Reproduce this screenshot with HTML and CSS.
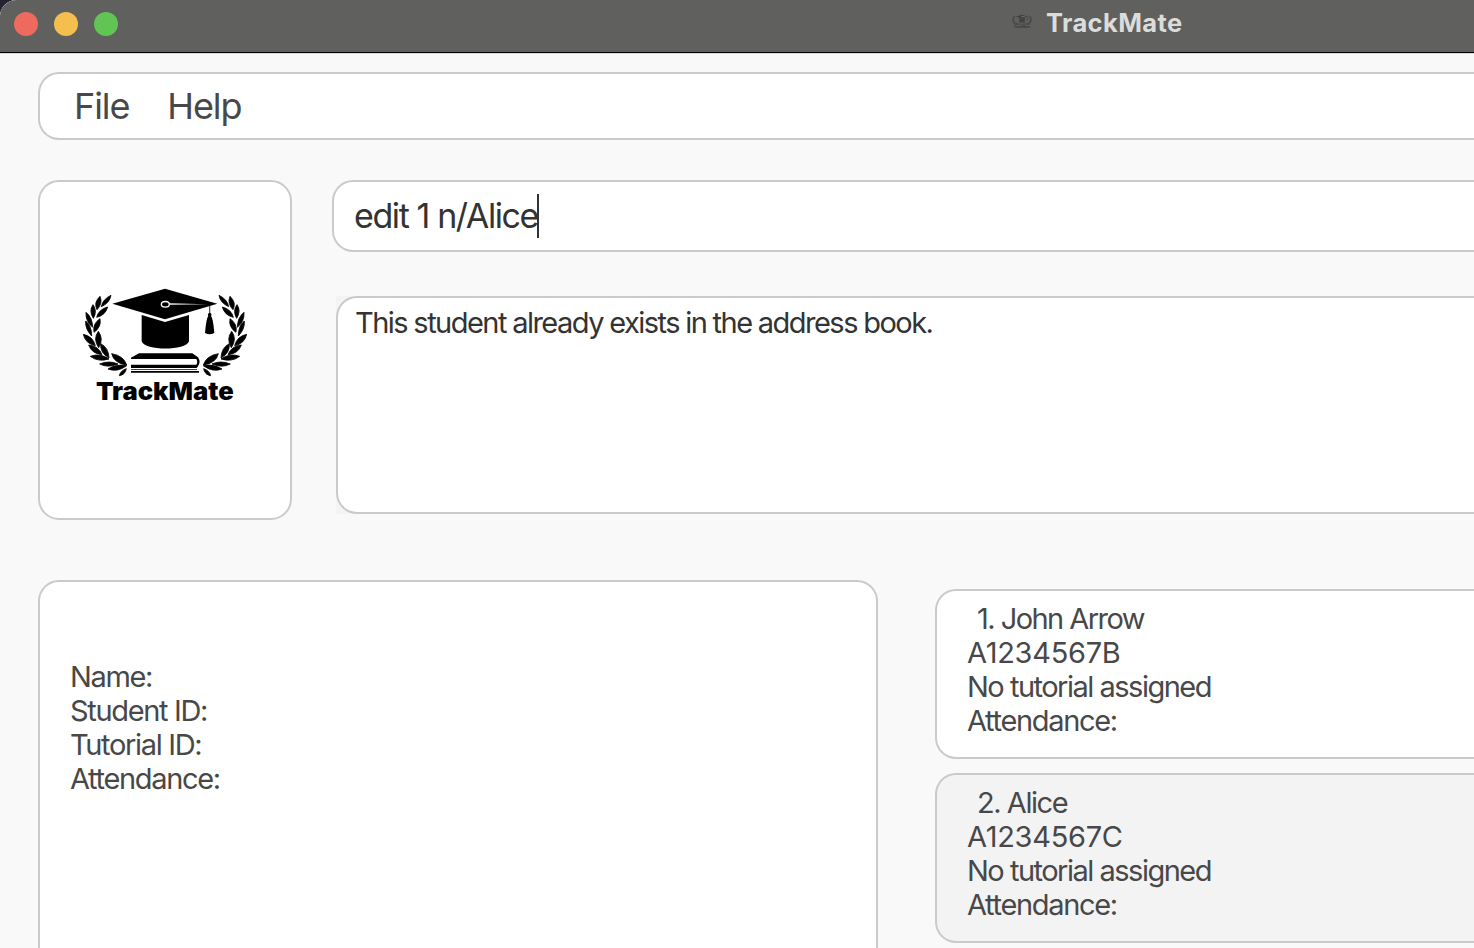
FILE: index.html
```html
<!DOCTYPE html>
<html lang="en">
<head>
<meta charset="utf-8">
<title>TrackMate</title>
<link rel="stylesheet" href="styles.css">
</head>
<body>
<svg class="defs" width="0" height="0" aria-hidden="true">
  <defs>
    <g id="wreath" fill="currentColor" stroke="currentColor" stroke-width="2.5" stroke-linejoin="round">
      <path d="M94 95Q98 73 123 61Q119 84 94 95Z"/>
      <path d="M80 127Q86 103 113 96Q106 121 80 127Z"/>
      <path d="M81 104Q70 83 90 64Q99 86 81 104Z"/>
      <path d="M70 130Q56 107 69 89Q83 108 70 130Z"/>
      <path d="M72 172Q67 146 90 131Q95 156 72 172Z"/>
      <path d="M68 157Q46 139 48 112Q67 127 68 157Z"/>
      <path d="M65 183Q45 162 47 138Q65 152 65 183Z"/>
      <path d="M86 218Q68 192 85 169Q102 192 86 218Z"/>
      <path d="M76 212Q46 206 40 178Q69 184 76 212Z"/>
      <path d="M117 249Q90 234 92 206Q116 218 117 249Z"/>
      <path d="M96 239Q65 236 56 210Q86 213 96 239Z"/>
      <path d="M117 252Q85 262 61 244Q91 233 117 252Z"/>
      <path d="M170 270Q132 265 125 236Q161 242 170 270Z"/>
      <path d="M144 267Q114 280 89 267Q117 255 144 267Z"/>
      <path d="M170 272Q141 293 114 282Q139 266 170 272Z"/>
      <path d="M169 281Q166 299 148 302Q151 287 169 281Z"/>
    </g>
    <g id="emblem" fill="currentColor">
      <use href="#wreath"/>
      <use href="#wreath" transform="matrix(-1 0 0 1 570 0)"/>
      <path d="M127 86L285 41L442 86L285 133Z"/>
      <path d="M215 120L285 141L357 120V199C348 228 224 228 215 199Z"/>
      <ellipse cx="286" cy="88" rx="12" ry="8.500" fill="none" stroke="#fff" stroke-width="4"/>
      <path d="M298 85L410 87.500L298 89Z" fill="#fff"/>
      <path d="M418 92H420.500V113Q427 117 423 123Q429 128 433 174Q419 182 405 174Q409 128 415 123Q411 117 418 113Z"/>
      <path d="M207 235H367L384 247Q394 262 383 275L380 279H183V269H379Q384 262 379 252H183V248Z"/>
      <path d="M183 282H381V284H183ZM183 288H387V293H183Z"/>
      <text class="emblem-name" x="78" y="374" textLength="413" lengthAdjust="spacingAndGlyphs">TrackMate</text>
    </g>
  </defs>
</svg>
<div class="window">
  <header class="titlebar">
    <div class="lights"><i class="light close"></i><i class="light minimize"></i><i class="light zoom"></i></div>
    <div class="caption">
      <svg class="caption-icon" viewBox="35 35 500 345"><use href="#emblem"/></svg>
      <span>TrackMate</span>
    </div>
  </header>
  <main class="content">
    <nav class="menu panel"><span>File</span><span>Help</span></nav>
    <section class="top">
      <div class="logo panel"><svg class="logo-art" viewBox="0 0 570 420"><use href="#emblem"/></svg></div>
      <div class="console">
        <div class="command panel"><span>edit 1 n/Alice</span><i class="caret"></i></div>
        <div class="result-back"><div class="result panel">This student already exists in the address book.</div></div>
      </div>
    </section>
    <section class="bottom">
      <div class="details panel">
        <div>Name:</div>
        <div>Student ID:</div>
        <div>Tutorial ID:</div>
        <div>Attendance:</div>
      </div>
      <div class="students">
        <article class="card panel">
          <div class="person">1. John Arrow</div>
          <div class="number">A1234567B</div>
          <div class="tutorial">No tutorial assigned</div>
          <div>Attendance:</div>
        </article>
        <article class="card panel alternate">
          <div class="person">2. Alice</div>
          <div class="number">A1234567C</div>
          <div class="tutorial">No tutorial assigned</div>
          <div>Attendance:</div>
        </article>
      </div>
    </section>
  </main>
</div>
</body>
</html>
```
FILE: styles.css
```css
* { box-sizing: border-box; }
body { margin: 0; background: #242332; font-family: Inter, "Liberation Sans", sans-serif; color: #484848; }
.defs { display: block; position: absolute; }
.window { width: 1474px; height: 948px; overflow: hidden; background: #f9f9f9; border-top-left-radius: 16px; display: flex; flex-direction: column; }
.titlebar { height: 53px; flex: none; background: #60605e; border-bottom: 1px solid #000; border-top-left-radius: 16px; display: flex; align-items: flex-start; justify-content: space-between; }
.lights { display: flex; gap: 16px; padding: 12px 0 0 14px; }
.light { width: 24px; height: 24px; border-radius: 50%; }
.close { background: #ed6a5e; }
.minimize { background: #f5bf4f; }
.zoom { background: #61c554; }
.caption { display: flex; width: 462px; padding-top: 6px; font-size: 25.5px; line-height: 34px; font-weight: 700; color: #dcdcdb; letter-spacing: 0.4px; }
.caption-icon { width: 20px; height: 15px; margin: 8px 14px 0 0; color: #41413f; }
.emblem-name { font-family: Inter, sans-serif; font-size: 73px; font-weight: 900; letter-spacing: 0; }
.content { flex: 1; padding: 18px 0 0 38px; border-top: 1px solid #dadada; display: flex; flex-direction: column; }
.panel { background: #fff; border: 2px solid #cacaca; border-radius: 21px; }
.menu { height: 68px; flex: none; border-right: 0; border-radius: 21px 0 0 21px; padding-left: 34px; display: flex; gap: 38px; font-size: 36px; line-height: 64px; letter-spacing: -1.1px; }
.top { display: flex; margin-top: 40px; gap: 40px; height: 340px; flex: none; }
.logo { width: 254px; flex: none; padding: 93px 0 0 30px; }
.logo-art { display: block; width: 190px; height: 140px; color: #000; }
.console { flex: 1; display: flex; flex-direction: column; gap: 44px; }
.command { height: 72px; border-right: 0; border-radius: 21px 0 0 21px; padding-left: 20px; display: flex; font-size: 34px; line-height: 68px; letter-spacing: -1.4px; color: #333; }
.caret { width: 2px; height: 44px; margin: 12px 0 0 -1px; background: #333; }
.result-back { margin-left: 4px; background: #f4f4f4; height: 218px; }
.result { height: 218px; border-right: 0; border-radius: 21px 0 0 21px; padding: 8px 0 0 17px; font-size: 29px; line-height: 34px; letter-spacing: -1.52px; word-spacing: -0.4px; color: #333; }
.bottom { display: flex; margin-top: 60px; gap: 57px; height: 368px; flex: none; font-size: 29px; line-height: 34px; letter-spacing: -1.33px; }
.details { width: 840px; height: 420px; flex: none; padding: 78px 0 0 30px; }
.students { flex: 1; display: flex; flex-direction: column; gap: 14px; padding-top: 9px; }
.card { height: 170px; flex: none; border-right: 0; border-radius: 21px 0 0 21px; padding: 11px 0 0 30px; white-space: nowrap; }
.alternate { background: #f3f3f3; }
.person { padding-left: 10px; letter-spacing: -1.55px; }
.alternate .person { letter-spacing: -1.45px; }
.number { letter-spacing: -0.3px; }
.tutorial { letter-spacing: -1.5px; }
```
